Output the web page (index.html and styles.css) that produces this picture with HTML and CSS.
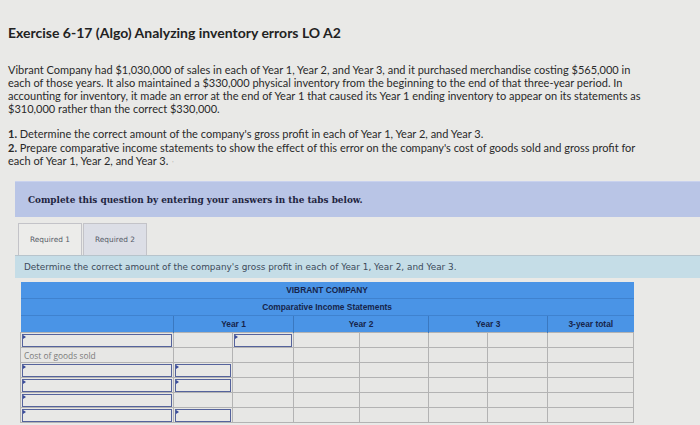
FILE: index.html
```html
<!DOCTYPE html>
<html>
<head>
<meta charset="utf-8">
<link rel="stylesheet" href="styles.css">
</head>
<body>
<div class="page">
  <h1 class="title">Exercise 6-17 (Algo) Analyzing inventory errors LO A2</h1>
  <p class="intro">Vibrant Company had $1,030,000 of sales in each of Year 1, Year 2, and Year 3, and it purchased merchandise costing $565,000 in each of those years. It also maintained a $330,000 physical inventory from the beginning to the end of that three-year period. In accounting for inventory, it made an error at the end of Year 1 that caused its Year 1 ending inventory to appear on its statements as $310,000 rather than the correct $330,000.</p>
  <div class="tasks">
    <div class="task"><b>1.</b> Determine the correct amount of the company's gross profit in each of Year 1, Year 2, and Year 3.</div>
    <div class="task"><b>2.</b> Prepare comparative income statements to show the effect of this error on the company's cost of goods sold and gross profit for each of Year 1, Year 2, and Year 3.<span class="dot">'</span></div>
  </div>
  <div class="work">
    <div class="banner">Complete this question by entering your answers in the tabs below.</div>
    <div class="tabs">
      <div class="tab tab-active">Required 1</div>
      <div class="tab">Required 2</div>
    </div>
    <div class="instr">Determine the correct amount of the company's gross profit in each of Year 1, Year 2, and Year 3.</div>
    <table class="sheet">
      <colgroup>
        <col class="c-label"><col class="c-a"><col class="c-b"><col class="c-c"><col class="c-d"><col class="c-e"><col class="c-f"><col class="c-g">
      </colgroup>
      <tr class="hrow"><th colspan="8">VIBRANT COMPANY</th></tr>
      <tr class="hrow"><th colspan="8">Comparative Income Statements</th></tr>
      <tr class="hrow yrow"><th></th><th colspan="2">Year 1</th><th colspan="2">Year 2</th><th colspan="2">Year 3</th><th>3-year total</th></tr>
      <tr><td><div class="inp"></div></td><td></td><td><div class="inp"></div></td><td></td><td></td><td></td><td></td><td></td></tr>
      <tr><td class="lbl">Cost of goods sold</td><td></td><td></td><td></td><td></td><td></td><td></td><td></td></tr>
      <tr><td><div class="inp"></div></td><td><div class="inp"></div></td><td></td><td></td><td></td><td></td><td></td><td></td></tr>
      <tr><td><div class="inp"></div></td><td><div class="inp"></div></td><td></td><td></td><td></td><td></td><td></td><td></td></tr>
      <tr><td><div class="inp"></div></td><td></td><td></td><td></td><td></td><td></td><td></td><td></td></tr>
      <tr><td><div class="inp"></div></td><td><div class="inp"></div></td><td></td><td></td><td></td><td></td><td></td><td></td></tr>
    </table>
  </div>
</div>
</body>
</html>
```
FILE: styles.css
```css
html, body {
  margin: 0;
  padding: 0;
  background: #e9e9e7;
  height: 425px;
  overflow: hidden;
}
.page {
  padding: 0 0 0 8px;
  font-family: Lato, "Open Sans", sans-serif;
  color: #2a2a2a;
}
.title {
  margin: 24px 0 0;
  font-size: 14px;
  line-height: 18px;
  font-weight: 700;
  color: #222;
}
.intro {
  margin: 21px 0 0;
  font-size: 11px;
  line-height: 13px;
  max-width: 640px;
}
.tasks {
  margin: 12px 0 0;
  font-size: 11px;
  line-height: 13px;
  max-width: 640px;
}
.task + .task {
  margin-top: 1px;
}
.task b {
  font-weight: 700;
}
.dot { color: #999; font-size: 6px; margin-left: 4px; }
.work {
  margin: 12px 0 0 7px;
}
.banner {
  background: #b9c5e6;
  height: 35px;
  display: flex;
  align-items: center;
  padding-left: 13px;
  font-family: "DejaVu Serif", serif;
  font-weight: 700;
  font-size: 8.9px;
  color: #1e2440;
  border-top: 1px solid #c9d2ee;
}
.tabs {
  display: flex;
  gap: 1px;
  margin: 6px 0 0 3px;
}
.tab {
  width: 62px;
  height: 31px;
  border: 1px solid #c3c3c8;
  border-bottom: none;
  background: #dcdee6;
  font-family: "DejaVu Sans", sans-serif;
  font-size: 7.4px;
  color: #555a66;
  display: flex;
  align-items: center;
  justify-content: center;
}
.tab-active {
  background: #ececea;
}
.instr {
  background: #c5dde7;
  height: 22px;
  display: flex;
  align-items: center;
  padding-left: 9px;
  font-family: "DejaVu Sans", sans-serif;
  font-size: 8.9px;
  color: #3c4a5a;
  border-top: 1px solid #b7c4cc;
}
.sheet {
  margin: 4px 0 0 5px;
  border-collapse: collapse;
  table-layout: fixed;
  width: 613px;
  font-family: "Liberation Sans", Arial, sans-serif;
}
.c-label { width: 153px; }
.c-a { width: 59px; }
.c-b { width: 61px; }
.c-c { width: 66px; }
.c-d { width: 69px; }
.c-e { width: 59px; }
.c-f { width: 60px; }
.c-g { width: 86px; }
.hrow th {
  background: #4a94e6;
  height: 16px;
  padding: 0;
  font-size: 8.4px;
  font-weight: 700;
  color: #16244a;
  text-align: center;
  border-bottom: 1px solid #3f82cf;
}
.yrow th {
  border-left: 1px solid #3a78c0;
  border-bottom: none;
}
.yrow th:first-child { border-left: none; }
td {
  height: 14px;
  padding: 0;
  background: #e7e7e5;
  border: 1px solid #b3b3b3;
  position: relative;
}
td.lbl {
  font-family: "Open Sans", sans-serif;
  font-size: 8.4px;
  color: #7a7a7a;
  padding-left: 3px;
}
.inp {
  height: 11px;
  margin: 0 1px;
  border: 1.5px solid #55639c;
  background: #e8e8e6;
  position: relative;
}
.inp::before {
  content: "";
  position: absolute;
  left: 0;
  top: 0;
  border-left: 3px solid #3a4c9a;
  border-top: 2px solid transparent;
  border-bottom: 2px solid transparent;
}
```
